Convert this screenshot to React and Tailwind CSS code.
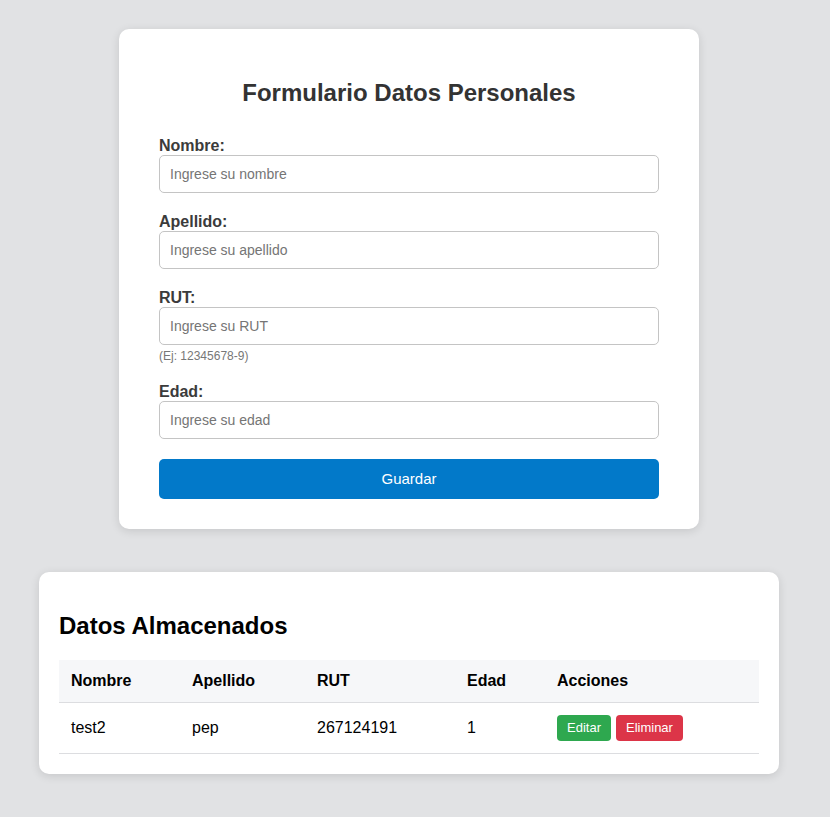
const fields = [
  { label: 'Nombre:', placeholder: 'Ingrese su nombre' },
  { label: 'Apellido:', placeholder: 'Ingrese su apellido' },
  { label: 'RUT:', placeholder: 'Ingrese su RUT', hint: '(Ej: 12345678-9)' },
  { label: 'Edad:', placeholder: 'Ingrese su edad' },
];

const rows = [{ nombre: 'test2', apellido: 'pep', rut: '267124191', edad: '1' }];

export default function App() {
  return (
    <div className="min-h-[817px] bg-[#e1e2e4] pt-[29px] pb-[43px] pr-3 flex flex-col items-center font-['Liberation_Sans',Arial,sans-serif]">
      <div className="w-[580px] rounded-[10px] bg-white px-10 pt-[30px] pb-[30px] shadow-[0_2px_10px_rgba(0,0,0,0.12)]">
        <h2 className="mt-5 mb-[30px] text-center text-2xl leading-7 font-bold text-[#333]">Formulario Datos Personales</h2>
        <form className="flex flex-col" onSubmit={(e) => e.preventDefault()}>
          {fields.map((f) => (
            <div key={f.label} className="mb-5">
              <label className="block text-base leading-[18px] font-bold text-[#3b3b3b]">{f.label}</label>
              <input
                placeholder={f.placeholder}
                className="block h-[38px] w-full rounded-[5px] border border-[#c4c4c4] px-[10px] text-sm text-[#333] placeholder:text-[#757575] outline-none"
              />
              {f.hint && <small className="mt-1 block text-xs leading-[14px] text-[#777]">{f.hint}</small>}
            </div>
          ))}
          <button type="submit" className="h-10 w-full rounded-[5px] bg-[#0279c9] text-[15px] text-white">Guardar</button>
        </form>
      </div>

      <div className="mt-[43px] w-[740px] rounded-[10px] bg-white px-5 pt-5 pb-5 shadow-[0_2px_10px_rgba(0,0,0,0.12)]">
        <h2 className="mt-5 mb-5 text-2xl leading-7 font-bold text-black">Datos Almacenados</h2>
        <table className="w-full border-collapse text-left text-base text-black">
          <thead>
            <tr className="bg-[#f6f7f9] border-b border-[#dcdde0]">
              <th className="w-[121px] px-3 py-3 leading-[18px] font-bold">Nombre</th>
              <th className="w-[125px] px-3 py-3 leading-[18px] font-bold">Apellido</th>
              <th className="w-[150px] px-3 py-3 leading-[18px] font-bold">RUT</th>
              <th className="w-[90px] px-3 py-3 leading-[18px] font-bold">Edad</th>
              <th className="px-3 py-3 leading-[18px] font-bold">Acciones</th>
            </tr>
          </thead>
          <tbody>
            {rows.map((r) => (
              <tr key={r.rut} className="border-b border-[#dcdde0]">
                <td className="px-3 py-3 leading-[26px]">{r.nombre}</td>
                <td className="px-3 py-3 leading-[26px]">{r.apellido}</td>
                <td className="px-3 py-3 leading-[26px]">{r.rut}</td>
                <td className="px-3 py-3 leading-[26px]">{r.edad}</td>
                <td className="px-3 py-3">
                  <div className="flex gap-[5px]">
                    <button className="h-[26px] rounded-[4px] bg-[#2ea84f] px-[10px] text-[13px] text-white">Editar</button>
                    <button className="h-[26px] rounded-[4px] bg-[#dc3548] px-[10px] text-[13px] text-white">Eliminar</button>
                  </div>
                </td>
              </tr>
            ))}
          </tbody>
        </table>
      </div>
    </div>
  );
}
